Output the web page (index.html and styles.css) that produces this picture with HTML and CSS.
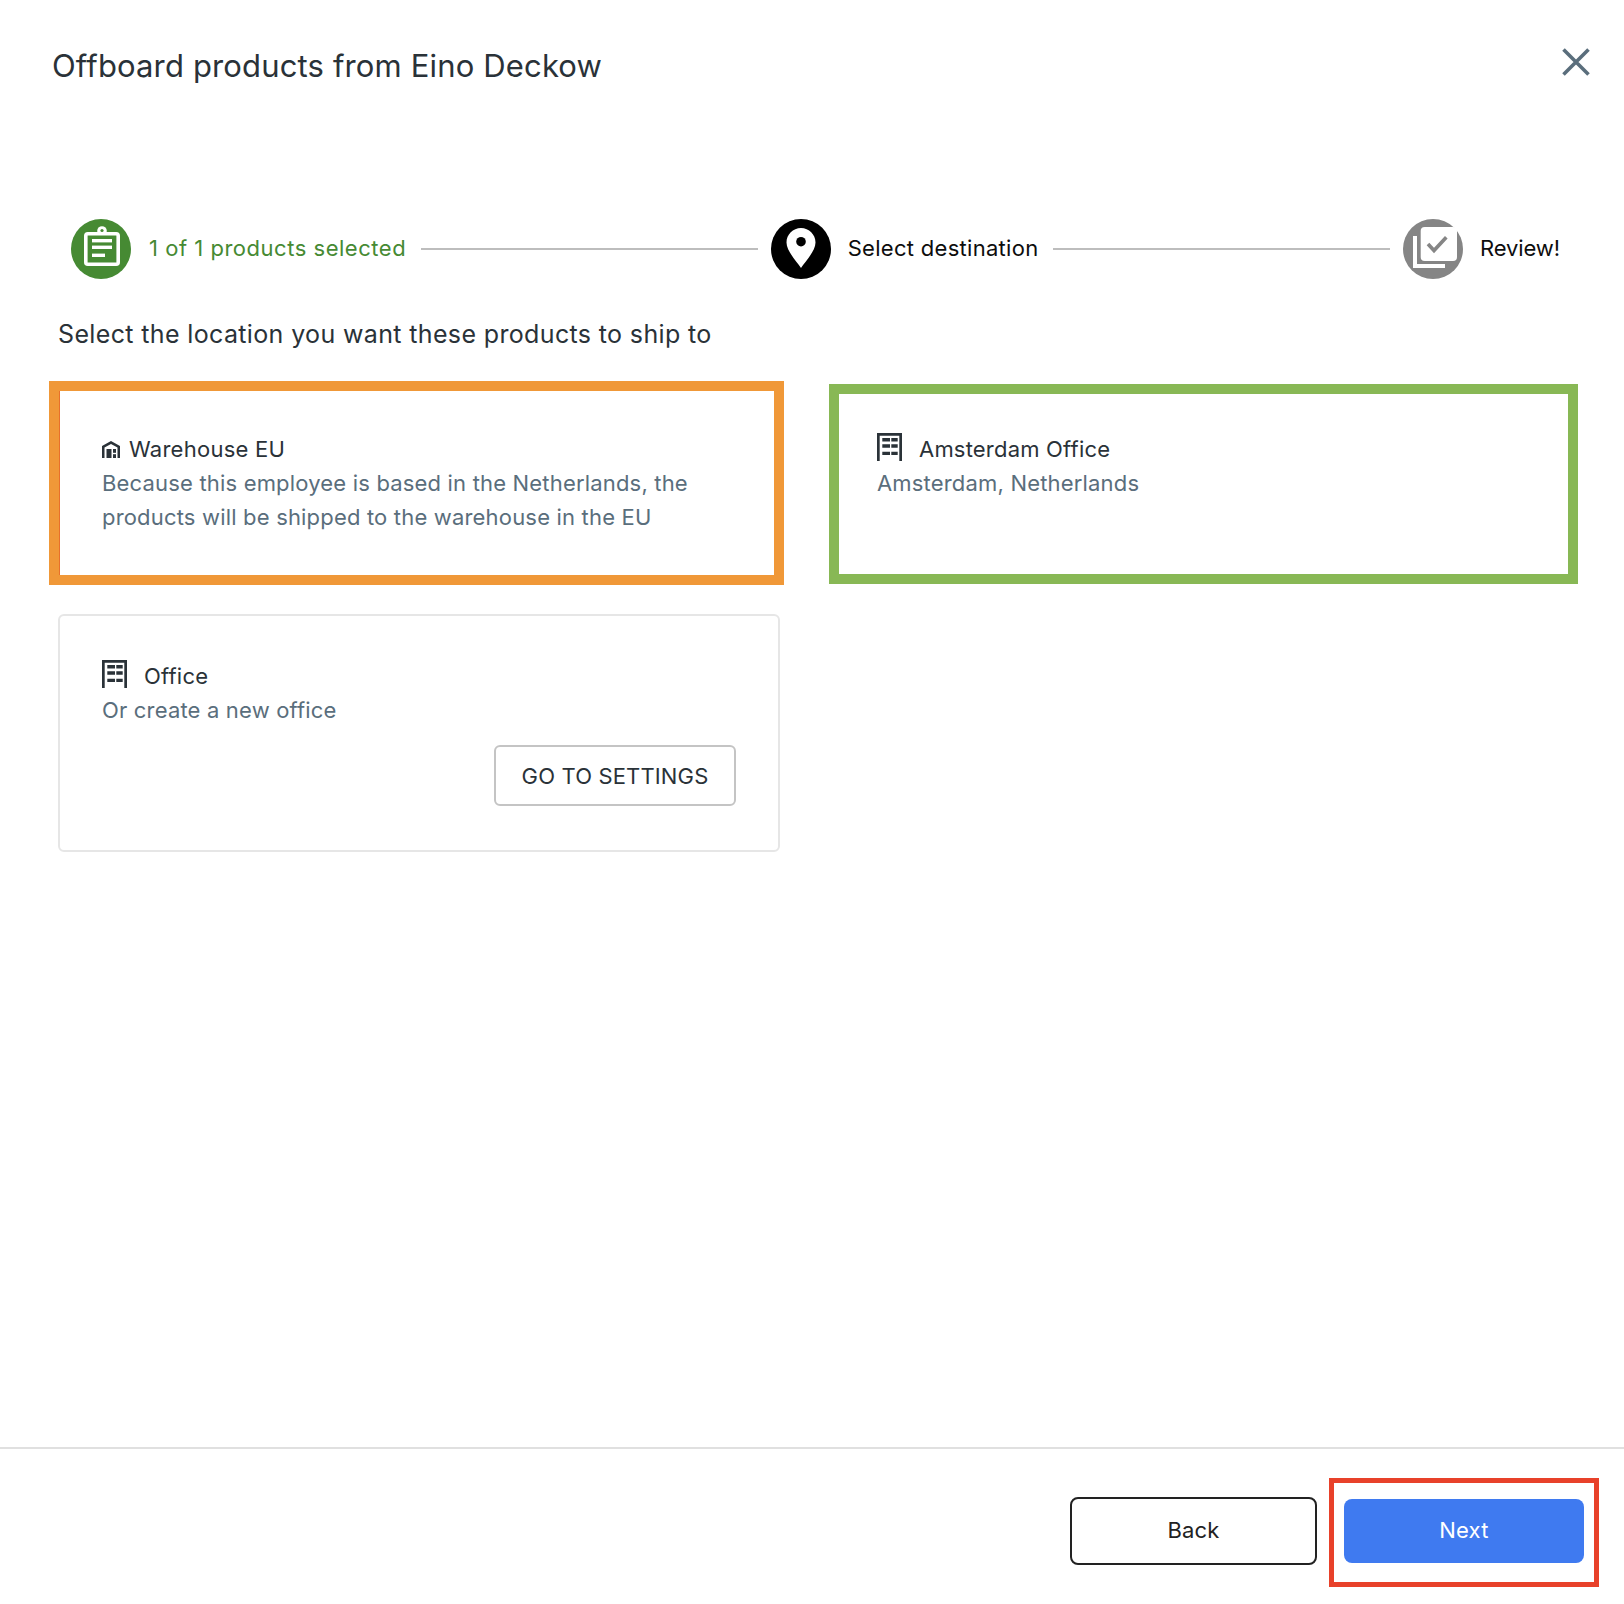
FILE: index.html
```html
<!DOCTYPE html>
<html lang="en">
<head>
<meta charset="utf-8">
<title>Offboard products</title>
<link rel="stylesheet" href="styles.css">
</head>
<body>
<div class="page">
  <header class="header">
    <h1 class="title">Offboard products from Eino Deckow</h1>
    <svg class="close" viewBox="0 0 28 28" aria-label="Close"><path d="M1.5 1.5 26.5 26.5M26.5 1.5 1.5 26.5"/></svg>
  </header>

  <div class="steps">
    <svg class="step-icon" viewBox="0 0 60 60">
      <circle cx="30" cy="30" r="30" fill="#468a33"/>
      <circle cx="31" cy="12" r="4.8" fill="#fff"/>
      <circle cx="31" cy="11.5" r="1.6" fill="#468a33"/>
      <rect x="14.8" y="14.8" width="32.4" height="30.4" rx="2" fill="#468a33" stroke="#fff" stroke-width="3.6"/>
      <rect x="21" y="20" width="20" height="3.4" fill="#fff"/>
      <rect x="21" y="26.6" width="20" height="3.4" fill="#fff"/>
      <rect x="21" y="34.6" width="13" height="3.4" fill="#fff"/>
    </svg>
    <span class="step-label step-done">1 of 1 products selected</span>
    <span class="step-line"></span>
    <svg class="step-icon" viewBox="0 0 60 60">
      <circle cx="30" cy="30" r="30" fill="#000"/>
      <path fill="#fff" d="M30 9C22 9 15.5 15.5 15.5 23.5 15.5 32 26 43 30 49 34 43 44.500 32 44.500 23.500 44.500 15.500 38 9 30 9Z"/>
      <circle cx="30" cy="22.700" r="4.800" fill="#000"/>
    </svg>
    <span class="step-label step-current">Select destination</span>
    <span class="step-line"></span>
    <svg class="step-icon" viewBox="0 0 60 60">
      <circle cx="30" cy="30" r="30" fill="#858585"/>
      <rect x="17.700" y="8" width="36.300" height="34" rx="4" fill="#fff"/>
      <path fill="none" stroke="#858585" stroke-width="3.600" d="M25 25 31 31.500 43.300 18.300"/>
      <path fill="#fff" d="M10 17h4v28h28v4H10Z"/>
    </svg>
    <span class="step-label step-review">Review!</span>
  </div>

  <p class="instruction">Select the location you want these products to ship to</p>

  <div class="locations">
    <section class="card card-orange">
      <div class="card-title card-title-tight">
        <svg class="icon-warehouse" viewBox="0 0 18 17"><path d="M0 5 9 0 18 5V17H15.500V6.500L9 3 2.500 6.500V17H0Z"/><rect x="4.500" y="8" width="5" height="9"/><rect x="11" y="8" width="3" height="3.800"/><rect x="11" y="13.200" width="3" height="3.800"/></svg>
        <span>Warehouse EU</span>
      </div>
      <p class="card-text">Because this employee is based in the Netherlands, the products will be shipped to the warehouse in the EU</p>
    </section>

    <section class="card card-green">
      <div class="card-title">
        <svg class="icon-building" viewBox="0 0 25 28"><path d="M0 0H25V28H22.300V2.700H2.700V28H0Z"/><path d="M5.300 5h7.700v3.400H5.300zM14.300 5h6.400v3.400h-6.400zM5.300 11.300h7.700v3.400H5.300zM14.300 11.300h6.400v3.400h-6.400zM5.300 18.700h7.700v3.400H5.300zM14.300 18.700h6.400v3.400h-6.400z"/></svg>
        <span>Amsterdam Office</span>
      </div>
      <p class="card-text">Amsterdam, Netherlands</p>
    </section>

    <section class="card card-office">
      <div class="card-title">
        <svg class="icon-building" viewBox="0 0 25 28"><path d="M0 0H25V28H22.300V2.700H2.700V28H0Z"/><path d="M5.300 5h7.700v3.400H5.300zM14.300 5h6.400v3.400h-6.400zM5.300 11.300h7.700v3.400H5.300zM14.300 11.300h6.400v3.400h-6.400zM5.300 18.700h7.700v3.400H5.300zM14.300 18.700h6.400v3.400h-6.400z"/></svg>
        <span>Office</span>
      </div>
      <p class="card-text">Or create a new office</p>
      <div class="card-actions"><button class="btn-settings" type="button">GO TO SETTINGS</button></div>
    </section>
  </div>

  <footer class="footer">
    <button class="btn btn-back" type="button">Back</button>
    <div class="next-frame"><button class="btn btn-next" type="button">Next</button></div>
  </footer>
</div>
</body>
</html>
```
FILE: styles.css
```css
* { box-sizing: border-box; }
html, body { margin: 0; padding: 0; background: #fff; }
body { font-family: "Inter", "Liberation Sans", sans-serif; color: #2a3238; }
.page { height: 1604px; display: flex; flex-direction: column; overflow: hidden; }

.header { display: flex; justify-content: space-between; align-items: flex-start; padding: 44px 34px 0 52px; }
.title { margin: 0; font-size: 31px; line-height: 44px; font-weight: 400; letter-spacing: 0.15px; color: #2a3238; }
.close { width: 28px; height: 28px; margin-top: 4px; fill: none; stroke: #5a6e7c; stroke-width: 3.6; }

.steps { display: flex; align-items: center; margin-top: 131px; padding: 0 64px 0 71px; }
.step-icon { width: 60px; height: 60px; flex: none; }
.step-label { font-size: 22px; line-height: 30px; margin: -2px 0 0 17px; white-space: nowrap; }
.step-done { color: #468a33; letter-spacing: 0.52px; margin-left: 18px; }
.step-current { color: #0d0d0d; letter-spacing: 0.29px; }
.step-review { color: #0d0d0d; letter-spacing: -0.1px; }
.step-line { flex: 1; height: 2px; background: #bdbdbd; margin: 0 13px 0 15px; }

.instruction { margin: 35px 0 0 58px; font-size: 25px; line-height: 40px; letter-spacing: 0.36px; color: #2a3238; }

.locations { display: grid; grid-template-columns: 735px 749px; column-gap: 45px; row-gap: 29px; margin: 27px 0 0 49px; align-items: start; }
.card { background: #fff; }
.card-orange { height: 204px; border: 10px solid #f09838; padding: 41px 40px 0 43px; box-shadow: inset 1px 0 0 #e8702a; }
.card-green { height: 200px; margin-top: 3px; border: 10px solid #88b855; padding: 38px 40px 0 38px; }
.card-office { grid-column: 1; margin: 0 4px 0 9px; height: 238px; border: 2px solid #e6e6e6; border-radius: 6px; padding: 43px 42px 42px; }

.card-title { display: flex; align-items: center; gap: 17px; height: 34px; font-size: 22px; line-height: 34px; letter-spacing: 0.2px; color: #2a3238; }
.card-title-tight { gap: 9px; letter-spacing: 0.26px; }
.card-text { margin: 0; font-size: 22px; line-height: 34px; letter-spacing: 0.18px; color: #5a6e7c; }
.card-actions { display: flex; justify-content: flex-end; margin-top: 18px; }

.icon-building { width: 25px; height: 28px; flex: none; fill: #2a3238; margin-bottom: 4px; }
.icon-warehouse { width: 18px; height: 17px; flex: none; fill: #2a3238; }

.btn-settings { width: 242px; height: 61px; background: #fff; border: 2px solid #c4c4c4; border-radius: 6px; font: 400 22px "Inter", "Liberation Sans", sans-serif; letter-spacing: 0.15px; color: #2a3238; }

.footer { margin-top: auto; height: 157px; border-top: 2px solid #e0e0e0; display: flex; justify-content: flex-end; align-items: flex-start; padding: 29px 25px 0 0; }
.btn { font: 400 22px "Inter", "Liberation Sans", sans-serif; letter-spacing: 0.2px; border-radius: 8px; cursor: pointer; padding: 0 0 2px; }
.btn-back { width: 247px; height: 68px; margin: 19px 12px 0 0; background: #fff; border: 2px solid #222; color: #222; }
.next-frame { width: 270px; height: 109px; border: 5px solid #e8412a; padding: 16px 10px 0; }
.btn-next { width: 240px; height: 64px; background: #3f7af0; border: 0; color: #fff; }
```
